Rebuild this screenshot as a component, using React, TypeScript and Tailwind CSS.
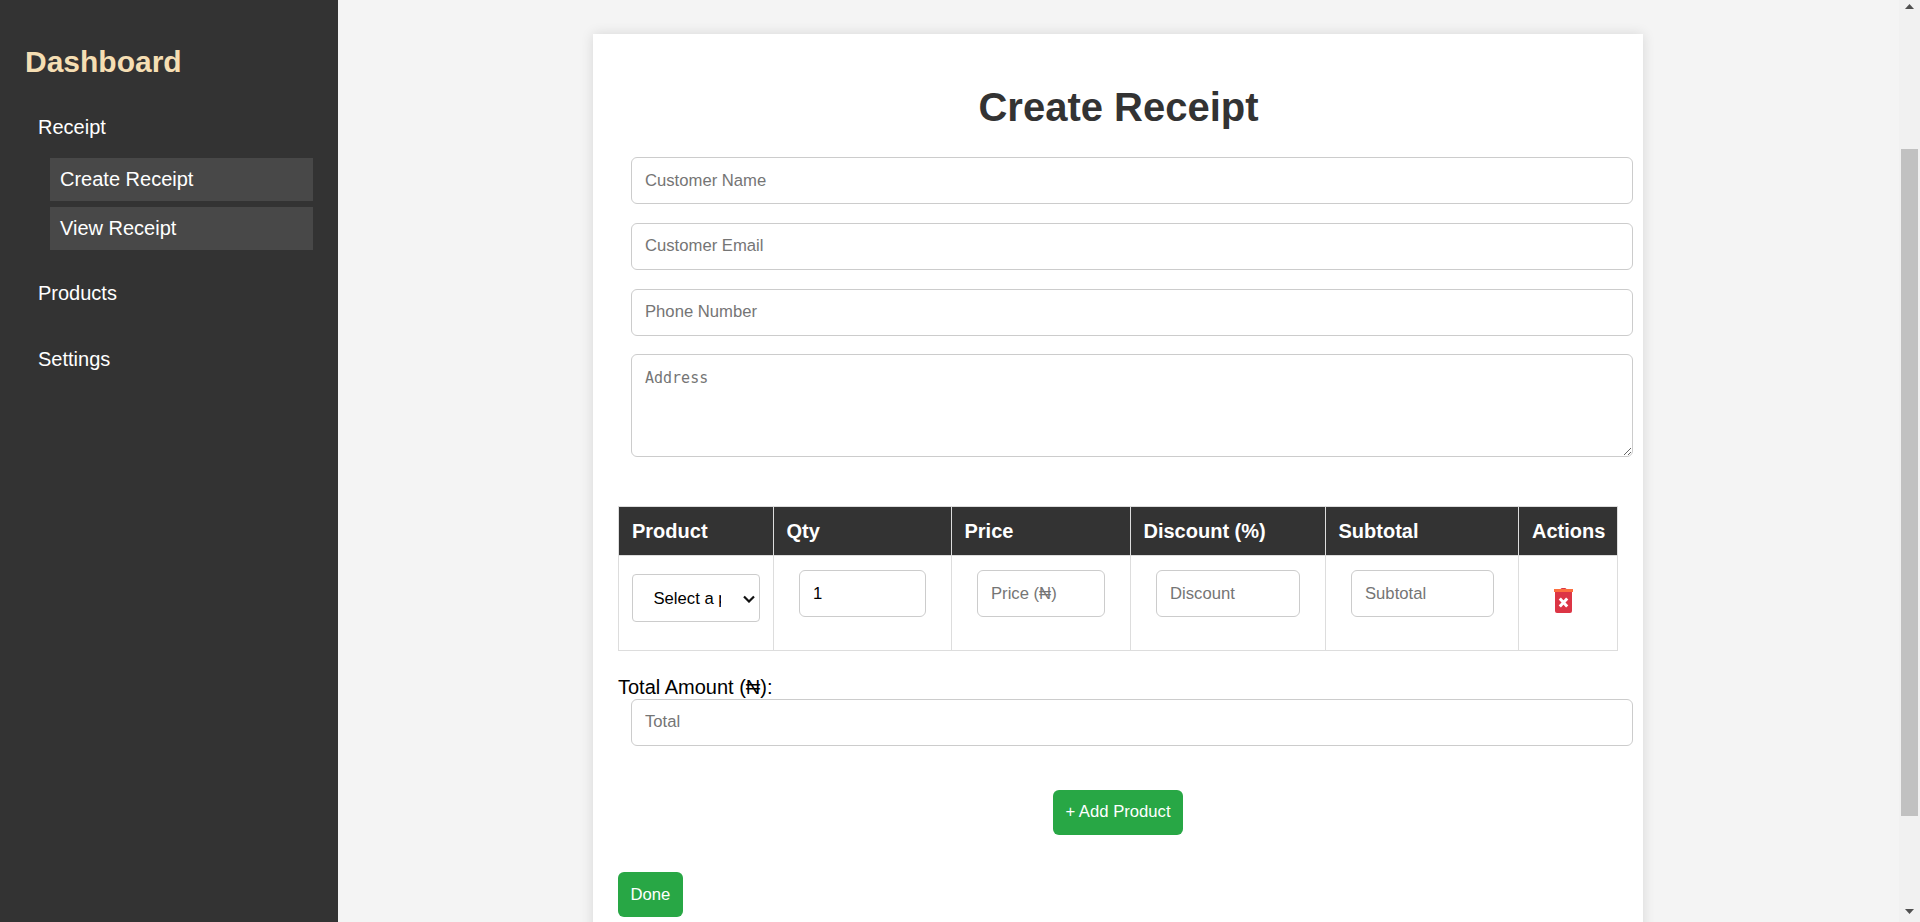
const inputClass =
  "block h-[47px] border border-[#ccc] rounded-[6px] bg-white pl-[13px] text-[16.67px] text-black placeholder:text-[#757575] outline-none";
const cellInput = inputClass + " ml-[13px] w-[calc(100%-25px)]";
const thClass =
  "border border-[#ddd] bg-[#333] px-[13px] h-[49px] text-left text-[20px] font-bold text-white";
const tdClass = "border border-[#ddd] px-[12.5px] pt-[14px] pb-[33px] align-top";
const btnClass =
  "h-[45px] rounded-[6px] bg-[#28a745] px-[12.5px] text-[16.67px] text-white";

function Sidebar() {
  return (
    <aside className="w-[338px] shrink-0 bg-[#333] px-[25px] pt-[45px] text-[20px] text-white">
      <h2 className="text-[30px] leading-[34px] font-bold text-[#f5deb3]">Dashboard</h2>
      <nav className="mt-[24px] flex flex-col">
        <a className="px-[13px] py-[12.5px] leading-[23px]">Receipt</a>
        <div className="mt-[7px] ml-[25px] flex flex-col gap-[6px]">
          <a className="flex h-[43px] items-center bg-[#484848] pb-[2px] pl-[10px]">Create Receipt</a>
          <a className="flex h-[43px] items-center bg-[#484848] pb-[2px] pl-[10px]">View Receipt</a>
        </div>
        <a className="mt-[19px] px-[13px] py-[12.5px] leading-[23px]">Products</a>
        <a className="mt-[18px] px-[13px] py-[12.5px] leading-[23px]">Settings</a>
      </nav>
    </aside>
  );
}

function TrashIcon() {
  return (
    <svg width="19" height="25" viewBox="0 0 19 25">
      <path d="M6.5 1.5 Q6.5 0 8 0 H11 Q12.5 0 12.5 1.5 Z" fill="#dc3545" />
      <rect x="0" y="1" width="19" height="3" fill="#fd6f3f" />
      <path d="M1 4 H18 V23 Q18 25 16 25 H3 Q1 25 1 23 Z" fill="#dc3545" />
      <path d="M5.8 10.5 L13.2 18.5 M13.2 10.5 L5.8 18.5" stroke="#fff" strokeWidth="3" />
    </svg>
  );
}

function ProductSelect() {
  return (
    <div className="relative w-[128px]">
      <select className="block h-[48px] w-full appearance-none rounded-[4px] border border-[#ccc] bg-white pr-[38px] pl-[21px] text-[16.67px] text-black">
        <option>Select a product</option>
      </select>
      <svg
        className="absolute top-[21px] right-[5px]"
        width="12"
        height="8"
        viewBox="0 0 12 8"
        fill="none"
      >
        <path d="M1 1.5 L6 6.5 L11 1.5" stroke="#111" strokeWidth="2.2" />
      </svg>
    </div>
  );
}

function ReceiptTable() {
  return (
    <table className="mt-[49px] w-[999px] table-fixed border-collapse">
      <thead>
        <tr>
          <th className={thClass + " w-[154.5px]"}>Product</th>
          <th className={thClass + " w-[178px]"}>Qty</th>
          <th className={thClass + " w-[179px]"}>Price</th>
          <th className={thClass + " w-[195px]"}>Discount (%)</th>
          <th className={thClass + " w-[193.5px]"}>Subtotal</th>
          <th className={thClass + " w-[99px]"}>Actions</th>
        </tr>
      </thead>
      <tbody>
        <tr>
          <td className="border border-[#ddd] px-[12.5px] pt-[18px] pb-[27px] align-top">
            <ProductSelect />
          </td>
          <td className={tdClass}>
            <input className={cellInput} defaultValue="1" />
          </td>
          <td className={tdClass}>
            <input className={cellInput} placeholder="Price (₦)" />
          </td>
          <td className={tdClass}>
            <input className={cellInput} placeholder="Discount" />
          </td>
          <td className={tdClass}>
            <input className={cellInput} placeholder="Subtotal" />
          </td>
          <td className="border border-[#ddd] px-[12.5px] pt-[32px] align-top">
            <div className="ml-[22px]">
              <TrashIcon />
            </div>
          </td>
        </tr>
      </tbody>
    </table>
  );
}

function ReceiptForm() {
  return (
    <div className="mt-[34px] ml-[255px] w-[1050px] bg-white px-[25px] pt-[50px] pb-[40px] shadow-[0_0_12px_rgba(0,0,0,0.12)]">
      <h1 className="pl-[1px] text-center text-[40px] leading-[46px] font-bold text-[#333]">Create Receipt</h1>
      <div className="mt-[27px] ml-[13px] flex w-[1002px] flex-col gap-[19px]">
        <input className={inputClass} placeholder="Customer Name" />
        <input className={inputClass + " pb-[1px]"} placeholder="Customer Email" />
        <input className={inputClass + " pb-[1px]"} placeholder="Phone Number" />
        <textarea
          className="-mt-[1px] block h-[103px] rounded-[6px] border border-[#ccc] bg-white pt-[12px] pl-[13px] font-['DejaVu_Sans_Mono',monospace] text-[15px] placeholder:text-[#757575] outline-none"
          placeholder="Address"
        />
      </div>
      <ReceiptTable />
      <label className="mt-[24px] block text-[20px] leading-[24px] text-black">Total Amount (₦):</label>
      <input className={inputClass + " ml-[13px] w-[1002px] pb-[1px]"} placeholder="Total" />
      <div className="mt-[44px] flex justify-center">
        <button className={btnClass + " pb-[2px]"}>+ Add Product</button>
      </div>
      <button className={btnClass + " mt-[37px] block pb-[1px]"}>Done</button>
    </div>
  );
}

function Scrollbar() {
  return (
    <div className="flex h-full w-[21px] shrink-0 flex-col items-center bg-[#f1f1f1] pt-[4px] pb-[8px]">
      <svg width="9" height="5" viewBox="0 0 9 5">
        <path d="M4.5 0 L9 5 H0 Z" fill="#505050" />
      </svg>
      <div className="mt-[140px] h-[667px] w-[17px] bg-[#c1c1c1]" />
      <svg className="mt-auto" width="9" height="5" viewBox="0 0 9 5">
        <path d="M0 0 H9 L4.5 5 Z" fill="#505050" />
      </svg>
    </div>
  );
}

export default function App() {
  return (
    <div className="flex h-[922px] overflow-hidden font-['Liberation_Sans',Arial,sans-serif]">
      <Sidebar />
      <main className="min-w-0 flex-1 overflow-hidden bg-[#f4f4f4]">
        <ReceiptForm />
      </main>
      <Scrollbar />
    </div>
  );
}
